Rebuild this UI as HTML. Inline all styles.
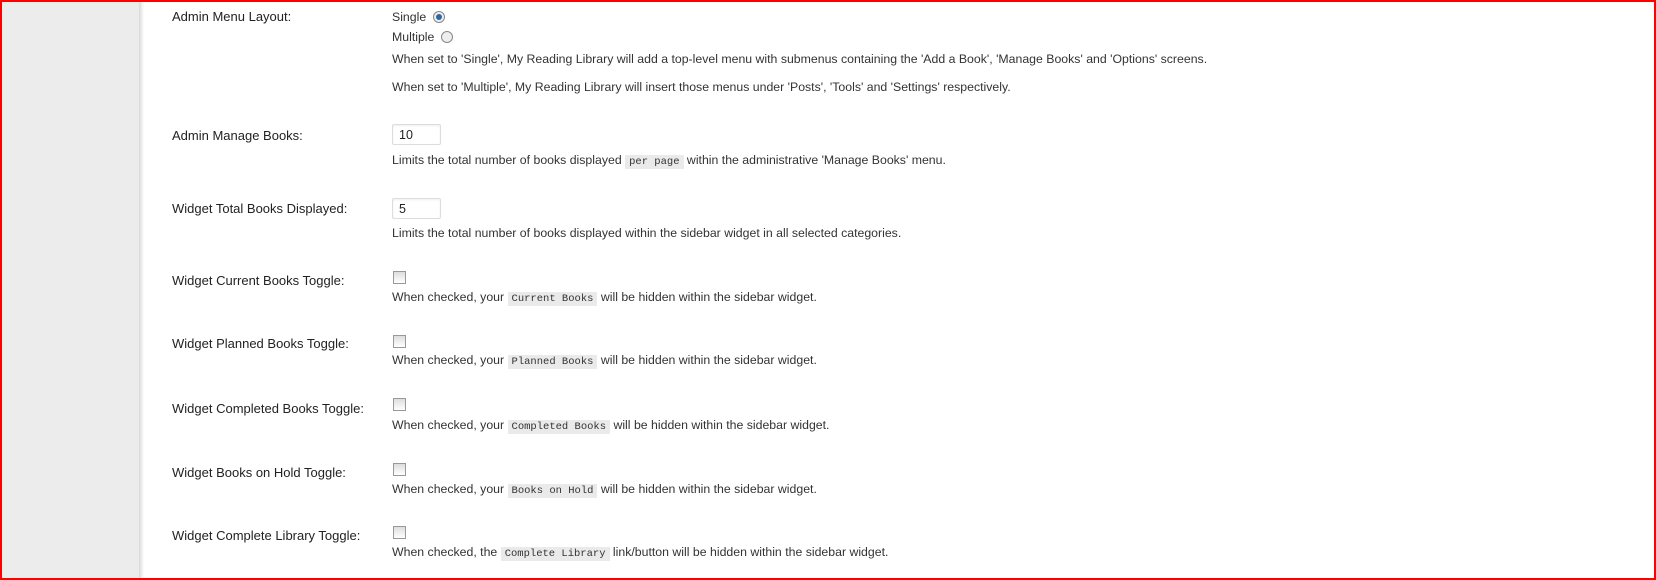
<!DOCTYPE html>
<html><head><style>
html,body{margin:0;padding:0;}
body{width:1656px;height:580px;position:relative;overflow:hidden;background:#fff;font-family:"Liberation Sans",Arial,sans-serif;font-size:12.3px;color:#333;}
.frame{position:absolute;left:0;top:0;width:1652px;height:576px;border:2px solid #f00;z-index:5;pointer-events:none;}
.side{position:absolute;left:0;top:0;width:139px;height:580px;background:#ececec;box-shadow:2px 0 4px rgba(0,0,0,.18);}
.t{position:absolute;line-height:16px;white-space:nowrap;}
.lab{left:172px;font-size:13px;color:#222;}
.c{left:392px;}
code{font-family:"Liberation Mono",monospace;font-size:10.5px;background:#eaeaea;padding:1px 4px;color:#333;}
.inp{position:absolute;left:392px;height:21px;border:1px solid #ddd;border-radius:2px;box-shadow:inset 0 1px 2px rgba(0,0,0,.07);font-size:12.5px;line-height:21px;padding-left:6px;box-sizing:border-box;width:49px;color:#222;}
.cb{position:absolute;left:393px;width:11px;height:11px;border:1px solid #999;background:linear-gradient(#ddd,#fff);}
.rad{display:inline-block;width:10px;height:10px;border-radius:50%;border:1px solid #888;vertical-align:-2px;margin-left:3px;background:#eee;position:relative;}
.rad.on::after{content:"";position:absolute;left:2px;top:2px;width:6px;height:6px;border-radius:50%;background:#2a6aa0;}
</style></head><body>
<div class="side"></div>
<div class="frame"></div>

<div class="t lab" style="top:9px">Admin Menu Layout:</div>
<div class="t c" style="top:9px">Single <span class="rad on"></span></div>
<div class="t c" style="top:29px">Multiple <span class="rad"></span></div>
<div class="t c" style="top:51px">When set to 'Single', My Reading Library will add a top-level menu with submenus containing the 'Add a Book', 'Manage Books' and 'Options' screens.</div>
<div class="t c" style="top:79px">When set to 'Multiple', My Reading Library will insert those menus under 'Posts', 'Tools' and 'Settings' respectively.</div>

<div class="t lab" style="top:128px">Admin Manage Books:</div>
<div class="inp" style="top:124px">10</div>
<div class="t c" style="top:152px">Limits the total number of books displayed <code>per page</code> within the administrative 'Manage Books' menu.</div>

<div class="t lab" style="top:201px">Widget Total Books Displayed:</div>
<div class="inp" style="top:198px">5</div>
<div class="t c" style="top:225px">Limits the total number of books displayed within the sidebar widget in all selected categories.</div>

<div class="t lab" style="top:273px">Widget Current Books Toggle:</div>
<div class="cb" style="top:271px"></div>
<div class="t c" style="top:289px">When checked, your <code>Current Books</code> will be hidden within the sidebar widget.</div>

<div class="t lab" style="top:336px">Widget Planned Books Toggle:</div>
<div class="cb" style="top:335px"></div>
<div class="t c" style="top:352px">When checked, your <code>Planned Books</code> will be hidden within the sidebar widget.</div>

<div class="t lab" style="top:401px">Widget Completed Books Toggle:</div>
<div class="cb" style="top:398px"></div>
<div class="t c" style="top:417px">When checked, your <code>Completed Books</code> will be hidden within the sidebar widget.</div>

<div class="t lab" style="top:465px">Widget Books on Hold Toggle:</div>
<div class="cb" style="top:463px"></div>
<div class="t c" style="top:481px">When checked, your <code>Books on Hold</code> will be hidden within the sidebar widget.</div>

<div class="t lab" style="top:528px">Widget Complete Library Toggle:</div>
<div class="cb" style="top:526px"></div>
<div class="t c" style="top:544px">When checked, the <code>Complete Library</code> link/button will be hidden within the sidebar widget.</div>
</body></html>
